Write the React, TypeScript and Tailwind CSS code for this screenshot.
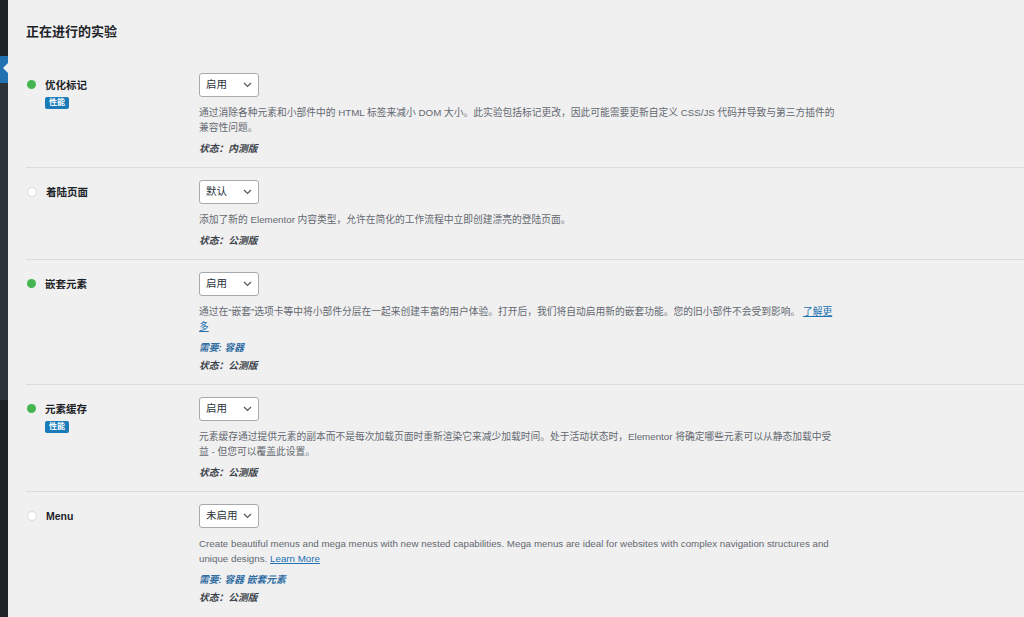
import React from 'react';

type Experiment = {
  name: string;
  active: boolean;
  badge?: string;
  value: string;
  desc: React.ReactNode;
  requires?: string;
  status: string;
};

const experiments: Experiment[] = [
  {
    name: '优化标记',
    active: true,
    badge: '性能',
    value: '启用',
    desc: '通过消除各种元素和小部件中的 HTML 标签来减小 DOM 大小。此实验包括标记更改，因此可能需要更新自定义 CSS/JS 代码并导致与第三方插件的兼容性问题。',
    status: '内测版',
  },
  {
    name: '着陆页面',
    active: false,
    value: '默认',
    desc: '添加了新的 Elementor 内容类型，允许在简化的工作流程中立即创建漂亮的登陆页面。',
    status: '公测版',
  },
  {
    name: '嵌套元素',
    active: true,
    value: '启用',
    desc: (
      <>
        通过在“嵌套”选项卡等中将小部件分层在一起来创建丰富的用户体验。打开后，我们将自动启用新的嵌套功能。您的旧小部件不会受到影响。{' '}
        <a className="text-[#2271b1] underline">了解更多</a>
      </>
    ),
    requires: '容器',
    status: '公测版',
  },
  {
    name: '元素缓存',
    active: true,
    badge: '性能',
    value: '启用',
    desc: '元素缓存通过提供元素的副本而不是每次加载页面时重新渲染它来减少加载时间。处于活动状态时，Elementor 将确定哪些元素可以从静态加载中受益 - 但您可以覆盖此设置。',
    status: '公测版',
  },
  {
    name: 'Menu',
    active: false,
    value: '未启用',
    desc: (
      <>
        Create beautiful menus and mega menus with new nested capabilities. Mega menus are ideal for websites with complex navigation structures and unique designs.{' '}
        <a className="text-[#2271b1] underline">Learn More</a>
      </>
    ),
    requires: '容器 嵌套元素',
    status: '公测版',
  },
];

function SelectBox({ value }: { value: string }) {
  return (
    <div className="flex h-[24px] w-[60px] items-center justify-between rounded-[3px] border border-[#a7aaad] bg-white pl-[6px] pr-[6px] text-[10.5px] text-[#2c3338]">
      <span>{value}</span>
      <svg width="9" height="6" viewBox="0 0 9 6" fill="none">
        <path d="M1 1l3.5 3.5L8 1" stroke="#50575e" strokeWidth="1.2" />
      </svg>
    </div>
  );
}

function ExperimentRow({ exp, first }: { exp: Experiment; first: boolean }) {
  return (
    <div className={`flex pb-[9px] pt-[12px] ${first ? '' : 'border-t border-[#dcdcde]'}`}>
      <div className="flex w-[173px] shrink-0 items-start">
        {exp.active ? (
          <span className="ml-[1px] mt-[7px] h-[9px] w-[9px] shrink-0 rounded-full bg-[#46b450]" />
        ) : (
          <span className="ml-[1px] mt-[7px] h-[10px] w-[10px] shrink-0 rounded-full border border-[#dcdcde] bg-white" />
        )}
        <div className="ml-[9px] flex flex-col items-start">
          <span className="text-[10.5px] font-semibold leading-[24px] text-[#1d2327]">{exp.name}</span>
          {exp.badge && (
            <span className="rounded-[2px] bg-[#1a7bb9] px-[4px] text-[8px] font-bold leading-[12px] text-white">
              {exp.badge}
            </span>
          )}
        </div>
      </div>
      <div className="flex flex-col items-start">
        <SelectBox value={exp.value} />
        <p className="mt-[8px] w-[636px] text-[9.75px] leading-[15px] text-[#646970]">{exp.desc}</p>
        <div className="mt-[5px]">
          {exp.requires && (
            <p className="text-[9.75px] font-bold italic leading-[18px] text-[#2f6da3]">需要: {exp.requires}</p>
          )}
          <p className="text-[9.75px] font-bold italic leading-[18px] text-[#3c434a]">状态：{exp.status}</p>
        </div>
      </div>
    </div>
  );
}

export default function App() {
  return (
    <div className="flex h-[617px] overflow-hidden font-['Liberation_Sans','Noto_Sans_CJK_SC',sans-serif]">
      <div className="relative flex w-[8px] shrink-0 flex-col">
        <div className="h-[56px] bg-[#1d2327]" />
        <div className="relative h-[27px] bg-[#2271b1]">
          <div className="absolute right-0 top-[7px] h-0 w-0 border-y-[5px] border-r-[5px] border-y-transparent border-r-[#f0f0f1]" />
        </div>
        <div className="h-[317px] bg-[#2c3338]" />
        <div className="flex-1 bg-[#1d2327]" />
      </div>
      <main className="flex-1 bg-[#f0f0f1] pl-[18px] pt-[23px]">
        <h2 className="text-[13px] font-semibold leading-[18px] text-[#1d2327]">正在进行的实验</h2>
        <div className="mt-[20px]">
          {experiments.map((exp, i) => (
            <ExperimentRow key={exp.name} exp={exp} first={i === 0} />
          ))}
        </div>
      </main>
    </div>
  );
}
